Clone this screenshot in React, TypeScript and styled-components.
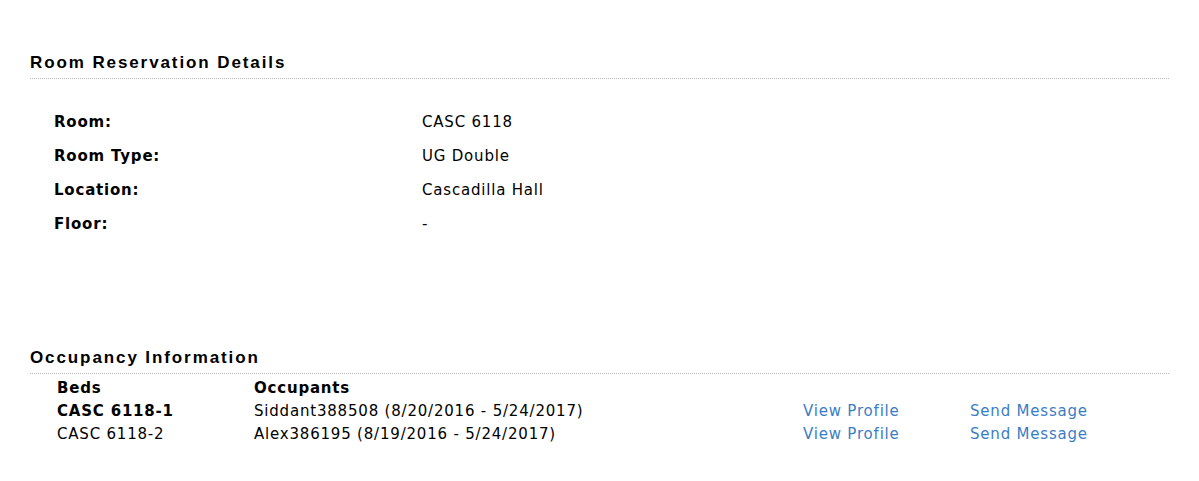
import React from "react";
import styled, { createGlobalStyle } from "styled-components";

const Global = createGlobalStyle`
  html, body { margin: 0; padding: 0; background: #fff; }
  body { font-family: "DejaVu Sans", Verdana, sans-serif; font-size: 15px; letter-spacing: 0.8px; color: #000; }
`;

const Page = styled.div`
  padding: 50px 30px 30px 30px;
`;

const Section = styled.section<{ $gap: number }>`
  margin-bottom: ${(p) => p.$gap}px;
`;

const Heading = styled.h2`
  margin: 0;
  font-family: "Liberation Sans", Arial, sans-serif;
  font-weight: bold;
  font-size: 17px;
  letter-spacing: 1.9px;
  line-height: 26px;
  padding-bottom: 2px;
  border-bottom: 1px dotted #bbb;
`;

const DetailGrid = styled.div`
  display: grid;
  grid-template-columns: 368px 1fr;
  grid-auto-rows: 34px;
  align-items: center;
  padding: 26px 0 0 24px;
`;

const Label = styled.div`
  font-weight: bold;
`;

const Value = styled.div``;

const OccTable = styled.div`
  display: grid;
  grid-template-columns: 197px 549px 167px 1fr;
  grid-auto-rows: 23px;
  align-items: center;
  padding: 2px 0 0 27px;
`;

const Cell = styled.div<{ $bold?: boolean }>`
  font-weight: ${(p) => (p.$bold ? "bold" : "normal")};
  white-space: nowrap;
`;

const Link = styled.a`
  color: #3b7dc4;
  text-decoration: none;
  cursor: pointer;
`;

const details = [
  ["Room:", "CASC 6118"],
  ["Room Type:", "UG Double"],
  ["Location:", "Cascadilla Hall"],
  ["Floor:", "-"],
];

const beds = [
  { bed: "CASC 6118-1", occ: "Siddant388508 (8/20/2016 - 5/24/2017)", bold: true },
  { bed: "CASC 6118-2", occ: "Alex386195 (8/19/2016 - 5/24/2017)", bold: false },
];

export default function App() {
  return (
    <>
      <Global />
      <Page>
        <Section $gap={104}>
          <Heading>Room Reservation Details</Heading>
          <DetailGrid>
            {details.map(([l, v]) => (
              <React.Fragment key={l}>
                <Label>{l}</Label>
                <Value>{v}</Value>
              </React.Fragment>
            ))}
          </DetailGrid>
        </Section>
        <Section $gap={0}>
          <Heading>Occupancy Information</Heading>
          <OccTable>
            <Cell $bold>Beds</Cell>
            <Cell $bold>Occupants</Cell>
            <Cell />
            <Cell />
            {beds.map((b) => (
              <React.Fragment key={b.bed}>
                <Cell $bold={b.bold}>{b.bed}</Cell>
                <Cell>{b.occ}</Cell>
                <Cell><Link>View Profile</Link></Cell>
                <Cell><Link>Send Message</Link></Cell>
              </React.Fragment>
            ))}
          </OccTable>
        </Section>
      </Page>
    </>
  );
}
